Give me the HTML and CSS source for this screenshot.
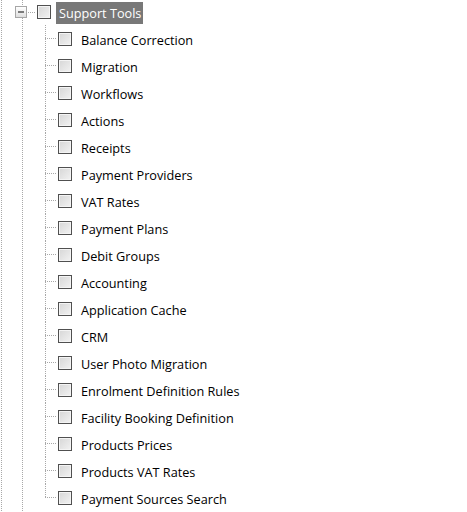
FILE: index.html
```html
<!DOCTYPE html>
<html>
<head>
<meta charset="utf-8">
<link rel="stylesheet" href="styles.css">
</head>
<body>
<div class="tree">
  <div class="root-row">
    <span class="expander"><span class="minus"></span></span>
    <span class="root-conn"></span>
    <span class="check"></span>
    <span class="label selected">Support Tools</span>
  </div>
  <ul class="children">
    <li class="child"><span class="conn"></span><span class="check"></span><span class="label">Balance Correction</span></li>
    <li class="child"><span class="conn"></span><span class="check"></span><span class="label">Migration</span></li>
    <li class="child"><span class="conn"></span><span class="check"></span><span class="label">Workflows</span></li>
    <li class="child"><span class="conn"></span><span class="check"></span><span class="label">Actions</span></li>
    <li class="child"><span class="conn"></span><span class="check"></span><span class="label">Receipts</span></li>
    <li class="child"><span class="conn"></span><span class="check"></span><span class="label">Payment Providers</span></li>
    <li class="child"><span class="conn"></span><span class="check"></span><span class="label">VAT Rates</span></li>
    <li class="child"><span class="conn"></span><span class="check"></span><span class="label">Payment Plans</span></li>
    <li class="child"><span class="conn"></span><span class="check"></span><span class="label">Debit Groups</span></li>
    <li class="child"><span class="conn"></span><span class="check"></span><span class="label">Accounting</span></li>
    <li class="child"><span class="conn"></span><span class="check"></span><span class="label">Application Cache</span></li>
    <li class="child"><span class="conn"></span><span class="check"></span><span class="label">CRM</span></li>
    <li class="child"><span class="conn"></span><span class="check"></span><span class="label">User Photo Migration</span></li>
    <li class="child"><span class="conn"></span><span class="check"></span><span class="label">Enrolment Definition Rules</span></li>
    <li class="child"><span class="conn"></span><span class="check"></span><span class="label">Facility Booking Definition</span></li>
    <li class="child"><span class="conn"></span><span class="check"></span><span class="label">Products Prices</span></li>
    <li class="child"><span class="conn"></span><span class="check"></span><span class="label">Products VAT Rates</span></li>
    <li class="child last"><span class="conn"></span><span class="check"></span><span class="label">Payment Sources Search</span></li>
  </ul>
</div>
</body>
</html>
```
FILE: styles.css
```css
html, body {
  margin: 0;
  padding: 0;
  background: #ffffff;
}

.tree {
  height: 512px;
  overflow: hidden;
  font-family: "Open Sans", "Noto Sans", sans-serif;
  font-size: 12.7px;
  color: #000;
  background-image:
    repeating-linear-gradient(to bottom, #a8a8a8 0 1px, transparent 1px 2px),
    repeating-linear-gradient(to bottom, #a8a8a8 0 1px, transparent 1px 2px);
  background-size: 1px 100%, 1px 100%;
  background-position: 1px 0, 22px 0;
  background-repeat: no-repeat;
}

.root-row {
  display: flex;
  align-items: flex-start;
  height: 25px;
  padding-left: 15px;
}

.expander {
  width: 10px;
  height: 10px;
  margin-top: 6px;
  border: 1px solid #a6a6a6;
  background: linear-gradient(to bottom, #ffffff, #dedede);
  display: flex;
  align-items: center;
  justify-content: center;
  flex: none;
}

.minus {
  width: 6px;
  height: 2px;
  background: #7a7a7a;
}

.root-conn {
  width: 8px;
  height: 1px;
  margin-left: 1px;
  margin-top: 12px;
  background: repeating-linear-gradient(to right, #a8a8a8 0 1px, transparent 1px 2px);
}

.check {
  box-sizing: border-box;
  width: 14px;
  height: 14px;
  border: 1px solid #505050;
  box-shadow: inset 0 0 0 1px #f4f4f4;
  background: linear-gradient(135deg, #d6d6d6, #f2f2f2);
  flex: none;
}

.root-row .check {
  margin-left: 1px;
  margin-top: 5px;
}

.label {
  white-space: nowrap;
  line-height: 22px;
}

.selected {
  background: #787878;
  color: #ffffff;
  margin-left: 5px;
  padding: 0 2px 0 3px;
  margin-top: 2px;
}

.children {
  list-style: none;
  margin: 0 0 0 45px;
  padding: 0;
}

.child {
  display: flex;
  align-items: center;
  height: 27px;
}

.conn {
  align-self: stretch;
  width: 12px;
  flex: none;
  background-image:
    repeating-linear-gradient(to bottom, #a8a8a8 0 1px, transparent 1px 2px),
    repeating-linear-gradient(to right, #a8a8a8 0 1px, transparent 1px 2px);
  background-size: 1px 100%, 100% 1px;
  background-position: 0 0, 0 13px;
  background-repeat: no-repeat;
}

.child.last .conn {
  background-size: 1px 14px, 100% 1px;
}

.child .check {
  margin-left: 1px;
}

.child .label {
  margin-left: 9px;
  margin-top: 2px;
}
```
